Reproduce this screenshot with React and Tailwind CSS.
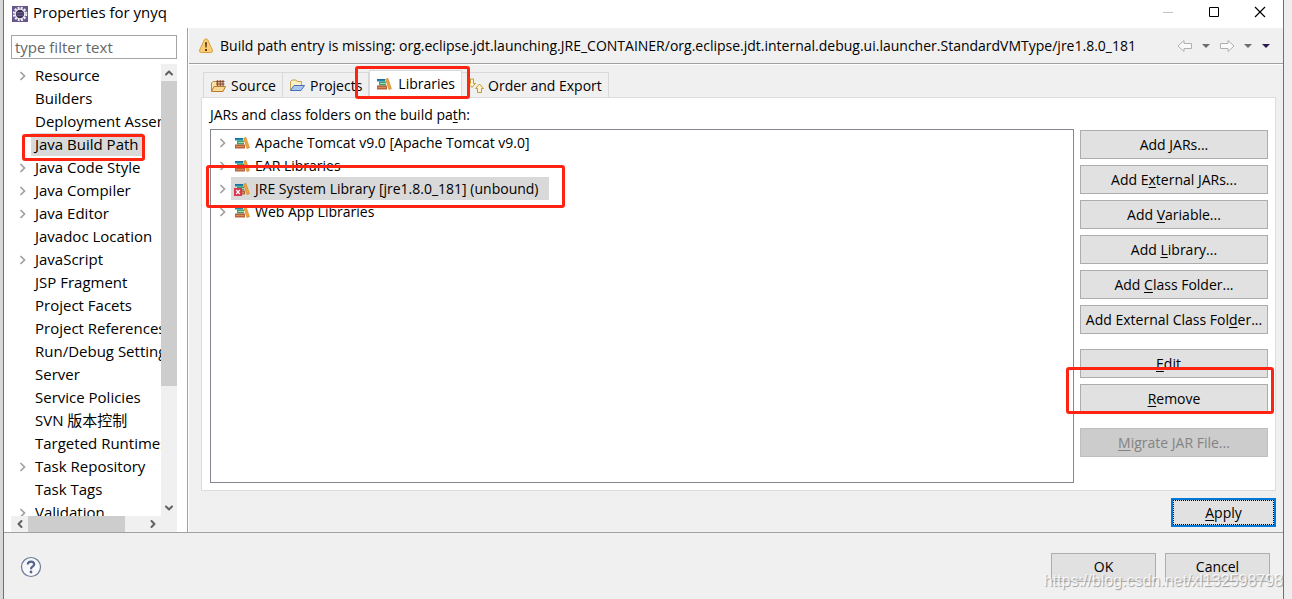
import { ChevronDown, ChevronLeft, ChevronRight, ChevronUp } from 'lucide-react';

const categories = [
    { name: 'Resource', expandable: true },
    { name: 'Builders' },
    { name: 'Deployment Assembly' },
    { name: 'Java Build Path', selected: true },
    { name: 'Java Code Style', expandable: true },
    { name: 'Java Compiler', expandable: true },
    { name: 'Java Editor', expandable: true },
    { name: 'Javadoc Location' },
    { name: 'JavaScript', expandable: true },
    { name: 'JSP Fragment' },
    { name: 'Project Facets' },
    { name: 'Project References' },
    { name: 'Run/Debug Settings' },
    { name: 'Server' },
    { name: 'Service Policies' },
    { name: 'SVN 版本控制' },
    { name: 'Targeted Runtimes' },
    { name: 'Task Repository', expandable: true },
    { name: 'Task Tags' },
    { name: 'Validation', expandable: true },
];

const libraries = [
    { name: 'Apache Tomcat v9.0 [Apache Tomcat v9.0]' },
    { name: 'EAR Libraries' },
    { name: 'JRE System Library [jre1.8.0_181] (unbound)', selected: true, broken: true },
    { name: 'Web App Libraries' },
];

// Red highlight frame laid over the item it points at
function Marker({ className }) {
    return <span aria-hidden="true" className={`pointer-events-none absolute z-10 rounded-[3px] border-3 border-[#ff2412] ${className}`} />;
}

function EclipseIcon() {
    return (
        <svg width="16" height="16" viewBox="0 0 16 16" className="shrink-0">
            <rect width="16" height="16" fill="#67568c" />
            <circle cx="8" cy="8" r="6.2" fill="none" stroke="#f1eef5" strokeWidth="2" strokeDasharray="2 1.250" />
            <circle cx="8" cy="8" r="4.800" fill="#3a3058" stroke="#f2f0f6" strokeWidth="1.2" />
            <path d="M4.500 6.5h7M4.200 8h7.600M4.500 9.5h7" stroke="#6f6690" strokeWidth=".8" />
        </svg>
    );
}

function WarningIcon() {
    return (
        <svg width="16" height="16" viewBox="0 0 16 16" className="shrink-0">
            <path d="M6.3 1.8Q8 -.3 9.7 1.8L14.4 12Q15 14.5 12.8 14.5H3.2Q1 14.5 1.6 12Z" fill="#f9cd72" stroke="#d9a04a" />
            <path d="M7 4.3h2L8.6 9.5H7.4zM7 11h2v2H7z" fill="#5c3a12" />
        </svg>
    );
}

function BooksIcon({ broken }) {
    return (
        <svg width="16" height="16" viewBox="0 0 16 16" className="shrink-0">
            <path d="M1 3h8v2.500H1z" fill="#1c8ab0" />
            <path d="M1 3h8v1H1z" fill="#1670a0" />
            <path d="M3 5.500h7v4H3z" fill="#3f9c6a" />
            <path d="M4 7h6v1H4z" fill="#a9dbb9" />
            <path d="M1 9.500h10v4H1z" fill="#b9623a" />
            <path d="M2 11h8v1H2z" fill="#d98c5c" />
            <path d="M9.600 3.200l2.300-.8L15.400 12.700l-2.400.8z" fill="#f0a638" stroke="#c97b1d" strokeWidth=".6" />
            {broken && (
                <>
                    <rect x="0" y="7" width="8" height="8" fill="#d9364f" />
                    <path d="M2.2 9l3.6 4M5.8 9l-3.6 4" stroke="#fff" strokeWidth="1.2" />
                </>
            )}
        </svg>
    );
}

function SourceIcon() {
    return (
        <svg width="16" height="16" viewBox="0 0 16 16" className="shrink-0">
            <path d="M1.500 13V5L3 3.500h3l1 1.500h6V8" fill="#fbe3a4" stroke="#c08a3e" />
            <path d="M6.500 2.500h7V9h-7z" fill="#e5b78c" />
            <path d="M6 3.500h8.500M6 6h8.500M7.500 2V9M10.300 2V9M13 2V9" stroke="#7a4a35" strokeWidth=".9" />
            <path d="M1.500 13.500L4 8.500h11.500L13 13.500z" fill="#f9d894" stroke="#b87a32" />
        </svg>
    );
}

function ProjectsIcon() {
    return (
        <svg width="16" height="16" viewBox="0 0 16 16" className="shrink-0">
            <path d="M1.500 12V3.500L3 2h4l1 1.500h4.500V8" fill="#fbf0c4" stroke="#c9a452" />
            <path d="M1.500 12.500L5 7.500h10.500L12 12.500z" fill="#a9c9f5" stroke="#4a6fb8" />
        </svg>
    );
}

function OrderIcon() {
    return (
        <svg width="16" height="16" viewBox="0 0 16 16" className="shrink-0">
            <path d="M2.500 1h3v4.500h2L4 9.500L.5 5.500h2z" fill="#fdf3cf" stroke="#c19a35" />
            <path d="M9.500 14.500v-4h-2l4-4.500l4 4.500h-2v4z" fill="#fdf3cf" stroke="#c19a35" />
        </svg>
    );
}

function HistoryArrow({ label, flip }) {
    return (
        <button aria-label={label}>
            <svg width="16" height="14" viewBox="0 0 16 14" className={flip ? 'rotate-180' : ''}>
                <path d="M1 7L7 1.500V4.500h7.500v5H7v3z" fill="#fafafa" stroke="#b0b0b0" strokeLinejoin="round" />
            </svg>
        </button>
    );
}

function Caret({ label, color }) {
    return (
        <button aria-label={label}>
            <svg width="10" height="6" viewBox="0 0 10 6"><path d="M1 1h8L5 5z" fill={color} /></svg>
        </button>
    );
}

function Expander({ show }) {
    return (
        <span className="flex w-5 shrink-0 items-center justify-center pl-[2px]">
            {show && <svg width="7" height="10" viewBox="0 0 7 10"><path d="M1.500 1L5.500 5L1.500 9" fill="none" stroke="#a0a0a0" strokeWidth="1.700" /></svg>}
        </span>
    );
}

// SWT push button, "hot" is the mnemonic letter
function PushButton({ before = '', hot = '', after = '', disabled, primary, className = '' }) {
    const frame = primary
        ? 'border-2 border-[#0078d7] outline-1 -outline-offset-3 outline-dotted outline-black'
        : 'border border-[#adadad] disabled:border-[#bfbfbf]';
    return (
        <button
            disabled={disabled}
            className={`h-[29px] bg-[#e1e1e1] whitespace-nowrap disabled:bg-[#cccccc] disabled:text-[#838383] ${frame} ${className}`}
        >
            {before}<span className="underline underline-offset-2">{hot}</span>{after}
        </button>
    );
}

function Sidebar() {
    return (
        <aside className="flex w-[184px] shrink-0 flex-col border-r border-[#a0a0a0] bg-white pt-[7px] pr-[10px] pl-[7px]">
            <input
                type="text"
                aria-label="Filter"
                placeholder="type filter text"
                className="h-6 w-full shrink-0 border border-[#a3a3a8] px-[3px] outline-none placeholder:text-[#666]"
            />
            <div className="mt-[5px] flex min-h-0 flex-1">
                <div className="relative flex min-w-0 flex-1">
                    <ul className="min-w-0 flex-1 overflow-hidden">
                        {categories.map((c) => (
                            <li key={c.name} className="flex h-[23px] whitespace-nowrap">
                                <Expander show={c.expandable} />
                                <span className={`px-1 leading-[23px] ${c.selected ? 'bg-[#d9d9d9]' : ''}`}>{c.name}</span>
                            </li>
                        ))}
                    </ul>
                    <Marker className="top-[70px] right-4 left-[11px] h-[27px]" />
                </div>
                <div className="flex w-4 flex-col bg-[#f0f0f0]">
                    <button aria-label="Scroll up" className="flex h-[17px] items-center justify-center"><ChevronUp size={12} strokeWidth={4} color="#606060" /></button>
                    <div className="h-[305px] bg-[#cdcdcd]" />
                    <button aria-label="Scroll down" className="mt-auto flex h-[17px] items-center justify-center"><ChevronDown size={12} strokeWidth={4} color="#606060" /></button>
                </div>
            </div>
            <div className="flex h-4 shrink-0 bg-[#f0f0f0]">
                <button aria-label="Scroll left" className="flex w-[17px] items-center justify-center"><ChevronLeft size={12} strokeWidth={4} color="#606060" /></button>
                <div className="w-[97px] bg-[#cdcdcd]" />
                <button aria-label="Scroll right" className="mr-4 ml-auto flex w-[17px] items-center justify-center"><ChevronRight size={12} strokeWidth={4} color="#606060" /></button>
            </div>
        </aside>
    );
}

function Tabs() {
    const tab = 'flex h-[25px] items-center border border-b-0 border-[#d9d9d9] px-[6px] pt-px';
    return (
        <div role="tablist" className="ml-[2px] flex items-end">
            <button role="tab" className={`${tab} gap-[5px]`}><SourceIcon />Source</button>
            <button role="tab" className={`${tab} gap-[5px] border-l-0`}><ProjectsIcon />Projects</button>
            <div className="relative">
                <button role="tab" aria-selected="true" className="relative -mb-px flex h-7 items-center gap-[6px] border border-b-0 border-[#d9d9d9] bg-white px-[6px] pb-[2px]">
                    <BooksIcon />Libraries
                </button>
                <Marker className="-top-1 -right-2 -bottom-[2px] -left-[14px]" />
            </div>
            <button role="tab" className={`${tab} gap-1 border-l-0`}><OrderIcon />Order and Export</button>
        </div>
    );
}

function LibrariesPanel() {
    return (
        <div role="tabpanel" className="flex min-h-0 flex-1 flex-col border border-[#dcdcdc] bg-white pt-[6px] pr-[7px] pb-[7px] pl-2">
            <p className="h-[25px] leading-[22px]">JARs and class folders on the build pa<span className="underline underline-offset-2">t</span>h:</p>
            <div className="flex min-h-0 flex-1 gap-[6px]">
                <ul className="flex-1 border border-[#828790] pt-px">
                    {libraries.map((lib) => (
                        <li key={lib.name} className="flex h-[23px]">
                            <Expander show />
                            <span className={`relative flex items-center gap-[5px] pr-[10px] pl-[3px] leading-[23px] ${lib.selected ? 'bg-[#d9d9d9]' : ''}`}>
                                <BooksIcon broken={lib.broken} />
                                {lib.name}
                                {lib.selected && <Marker className="-top-3 -right-4 -bottom-2 -left-[25px]" />}
                            </span>
                        </li>
                    ))}
                </ul>
                <div className="flex w-[188px] flex-col gap-[6px] pt-px">
                    <PushButton before="Add " hot="J" after="ARs..." />
                    <PushButton before="Add E" hot="x" after="ternal JARs..." />
                    <PushButton before="Add " hot="V" after="ariable..." />
                    <PushButton before="Add " hot="L" after="ibrary..." />
                    <PushButton before="Add " hot="C" after="lass Folder..." />
                    <PushButton before="Add External Class Fol" hot="d" after="er..." />
                    <PushButton hot="E" after="dit..." className="mt-[9px]" />
                    <div className="relative flex flex-col">
                        <PushButton hot="R" after="emove" />
                        <Marker className="-top-[17px] -right-[6px] -bottom-px -left-[14px]" />
                    </div>
                    <PushButton hot="M" after="igrate JAR File..." disabled className="mt-[9px]" />
                </div>
            </div>
        </div>
    );
}

export default function App() {
    return (
        <div className="flex h-screen overflow-hidden bg-linear-to-l from-[#eeeeee] to-[#d8d8d8] pr-2 pl-[3px] font-['Open_Sans','Noto_Sans_CJK_SC',sans-serif] text-[15px] text-black">
            <div className="flex min-w-0 flex-1 flex-col border-x border-[#707070] bg-[#f0f0f0]">
                <header className="flex h-7 shrink-0 items-center bg-white pl-2">
                    <EclipseIcon />
                    <h1 className="ml-[5px] pb-1 leading-6">Properties for ynyq</h1>
                    <div className="mr-[17px] mb-1 ml-auto flex gap-[34px]">
                        <button aria-label="Minimize"><svg width="12" height="12" viewBox="0 0 12 12"><path d="M1 6.500h10" stroke="#c4c4c4" /></svg></button>
                        <button aria-label="Maximize"><svg width="12" height="12" viewBox="0 0 12 12"><path d="M1.500 1.500h9v9h-9z" fill="none" stroke="#000" /></svg></button>
                        <button aria-label="Close"><svg width="12" height="12" viewBox="0 0 12 12"><path d="M1 1l10 10M11 1L1 11" stroke="#000" strokeWidth="1.200" /></svg></button>
                    </div>
                </header>
                <div className="flex min-h-0 flex-1">
                    <Sidebar />
                    <main className="flex min-w-0 flex-1 flex-col border-l border-white text-sm">
                        <div className="flex h-9 shrink-0 items-center gap-[6px] border-b border-[#a0a0a0] pr-3 pl-[9px] whitespace-nowrap">
                            <WarningIcon />
                            <p>Build path entry is missing: org.eclipse.jdt.launching.JRE_CONTAINER/org.eclipse.jdt.internal.debug.ui.launcher.StandardVMType/jre1.8.0_181</p>
                            <div className="ml-auto flex items-center gap-2">
                                <HistoryArrow label="Back" />
                                <Caret label="Back history" color="#6d6d6d" />
                                <HistoryArrow label="Forward" flip />
                                <Caret label="Forward history" color="#6d6d6d" />
                                <Caret label="View menu" color="#2b1a4f" />
                            </div>
                        </div>
                        <div className="flex min-h-0 flex-1 flex-col border-t border-white pt-[5px] pr-[7px] pb-[5px] pl-3">
                            <Tabs />
                            <LibrariesPanel />
                            <PushButton hot="A" after="pply" primary className="mt-[7px] w-[105px] self-end" />
                        </div>
                    </main>
                </div>
                <footer className="relative flex h-[67px] shrink-0 items-center justify-between border-t border-[#a0a0a0] pt-[2px] pr-[13px] pl-4">
                    <button aria-label="Help">
                        <svg width="22" height="22" viewBox="0 0 22 22">
                            <circle cx="11" cy="11" r="9.500" fill="#f8f8fa" stroke="#6b7a99" strokeWidth="1.200" />
                            <path d="M7.800 8.600Q7.800 5.600 11 5.600T14.200 8.300Q14.200 9.900 12.400 10.800Q11 11.500 11 13.200" fill="none" stroke="#54658c" strokeWidth="2.200" />
                            <circle cx="11" cy="16" r="1.400" fill="#54658c" />
                        </svg>
                    </button>
                    <div className="flex gap-[9px] text-sm">
                        <PushButton before="OK" className="w-[105px]" />
                        <PushButton before="Cancel" className="w-[105px]" />
                    </div>
                    <p className="pointer-events-none absolute right-0 bottom-2 font-['Liberation_Sans',sans-serif] text-base leading-5 text-white/80 text-shadow-[1px_1px_1px_#999]">https://blog.csdn.net/xl132598798</p>
                </footer>
            </div>
        </div>
    );
}
